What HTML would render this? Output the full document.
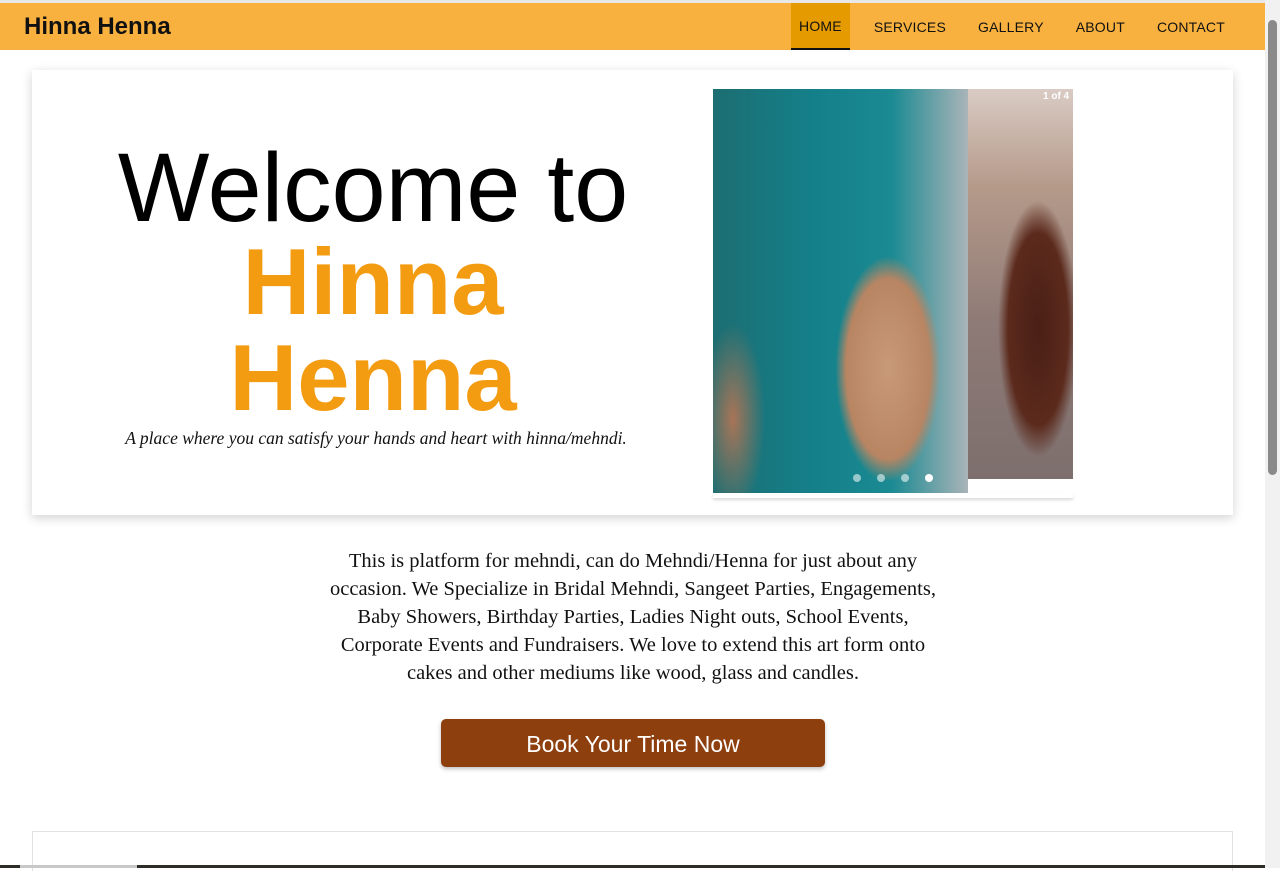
<!DOCTYPE html>
<html><head><meta charset="utf-8"><style>
*{margin:0;padding:0;box-sizing:border-box}
html,body{width:1280px;height:868px;overflow:hidden;background:#fff;font-family:"Liberation Sans",sans-serif}
.top{position:absolute;left:0;top:0;width:1265px;height:3px;background:#e8e8e8}
nav{position:absolute;left:0;top:3px;width:1265px;height:47px;background:#f8b13f}
.logo{position:absolute;left:24px;top:10px;font-weight:bold;font-size:24px;color:#111;letter-spacing:0px}
.links{position:absolute;right:0;top:0;height:47px;display:flex}
.links a{display:block;height:47px;line-height:48px;padding:0 16px;font-size:14px;color:#111;text-decoration:none;letter-spacing:0.2px}
.links a.on{background:#e59a00;border-bottom:2px solid #111;line-height:46px;padding:0 8px;margin-right:8px}
.sb{position:absolute;right:0;top:0;width:15px;height:868px;background:#f1f1f1}
.sb i{position:absolute;left:3px;top:20px;width:9px;height:455px;background:#8a8a8a;border-radius:5px}
.card{position:absolute;left:32px;top:70px;width:1201px;height:445px;background:#fff;box-shadow:0 3px 10px rgba(0,0,0,.18)}
.h1{position:absolute;left:0;top:142px;width:746px;text-align:center;font-size:97px;line-height:92px;color:#000}
.h2{position:absolute;left:0;top:234px;width:746px;text-align:center;font-size:94px;line-height:96px;font-weight:bold;color:#f39c12}
.tag{position:absolute;left:0;top:428px;width:752px;text-align:center;font-family:"Liberation Serif",serif;font-style:italic;font-size:17.5px;color:#111}
.img1{position:absolute;left:713px;top:89px;width:255px;height:404px;background:
radial-gradient(ellipse 70px 150px at 175px 280px,#c99a78 0,#b88563 60%,transparent 75%),
radial-gradient(ellipse 40px 120px at 20px 330px,#a87457 0,transparent 80%),
linear-gradient(90deg,#1c6e72 0,#14808a 40%,#1b8a92 70%,#a9b4b8 100%)}
.img2{position:absolute;left:968px;top:89px;width:105px;height:390px;background:
radial-gradient(ellipse 50px 160px at 70px 240px,#4a1f16 0,#5b2a1c 60%,transparent 80%),
linear-gradient(180deg,#d9cbc4 0,#b59a8a 25%,#8e7a76 60%,#7d6f6d 100%)}
.imgfoot{position:absolute;left:713px;top:493px;width:360px;height:5px;box-shadow:0 2px 3px rgba(0,0,0,.15)}
.cnt{position:absolute;left:1043px;top:91px;font-size:10px;color:#fff;font-weight:bold}
.dots{position:absolute;left:853px;top:474px;display:flex;gap:16px}
.dots i{width:8px;height:8px;border-radius:50%;background:rgba(255,255,255,.55)}
.dots i.on{background:#fff}
p.t{position:absolute;left:283px;top:547px;width:700px;text-align:center;font-family:"Liberation Serif",serif;font-size:20.5px;line-height:28px;color:#111;white-space:nowrap}
.btn{position:absolute;left:441px;top:719px;width:384px;height:48px;background:#8e3f0e;border-radius:5px;color:#fff;font-size:23px;text-align:center;line-height:50px;box-shadow:0 2px 4px rgba(0,0,0,.25)}
.card2{position:absolute;left:32px;top:831px;width:1201px;height:40px;border:1px solid #e2e2e2;border-bottom:none}
.bot{position:absolute;left:0;top:865px;width:1265px;height:3px;background:#2d2c27}
.bot i{position:absolute;left:20px;top:0;width:117px;height:3px;background:#c8c8c8}
</style></head><body>
<div class="top"></div>
<nav><div class="logo">Hinna Henna</div>
<div class="links"><a class="on">HOME</a><a>SERVICES</a><a>GALLERY</a><a>ABOUT</a><a style="padding-right:40px">CONTACT</a></div></nav>
<div class="card"></div>
<div class="h1">Welcome to</div>
<div class="h2">Hinna<br>Henna</div>
<div class="tag">A place where you can satisfy your hands and heart with hinna/mehndi.</div>
<div class="img1"></div><div class="img2"></div><div class="imgfoot"></div>
<div class="cnt">1 of 4</div>
<div class="dots"><i></i><i></i><i></i><i class="on"></i></div>
<p class="t">This is platform for mehndi, can do Mehndi/Henna for just about any<br>occasion. We Specialize in Bridal Mehndi, Sangeet Parties, Engagements,<br>Baby Showers, Birthday Parties, Ladies Night outs, School Events,<br>Corporate Events and Fundraisers. We love to extend this art form onto<br>cakes and other mediums like wood, glass and candles.</p>
<div class="btn">Book Your Time Now</div>
<div class="card2"></div>
<div class="bot"><i></i></div>
<div class="sb"><i></i></div>
</body></html>
